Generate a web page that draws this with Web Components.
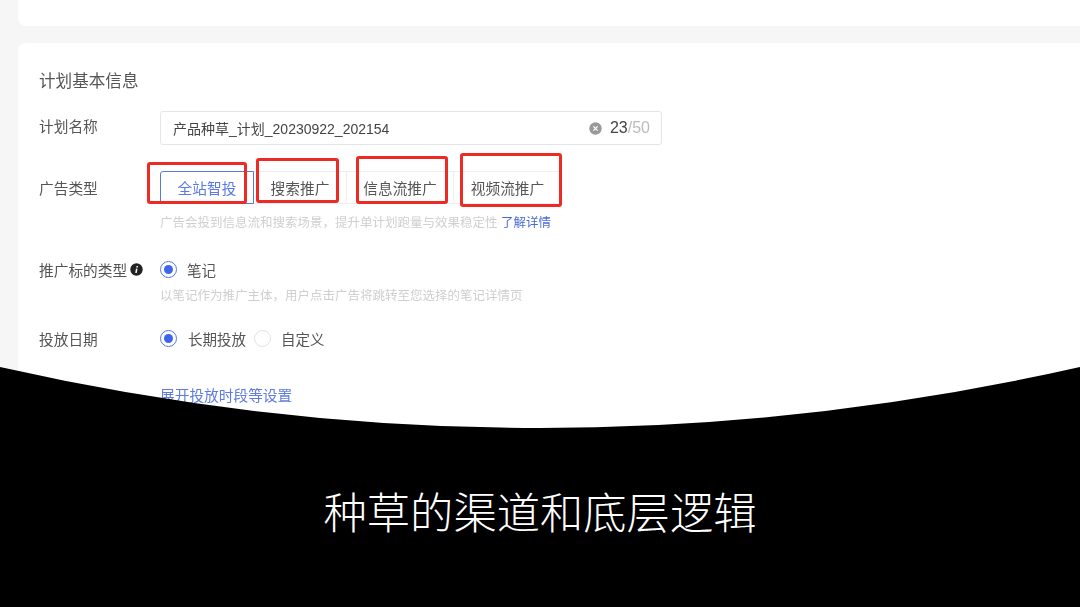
<!DOCTYPE html>
<html lang="zh-CN">
<head>
    <meta charset="UTF-8">
    <title>种草的渠道和底层逻辑</title>
    <style>
        html, body {
            margin: 0;
            width: 1080px;
            height: 607px;
            overflow: hidden;
            background: #f6f6f7;
            font-family: "Liberation Sans", "Noto Sans CJK SC", sans-serif;
        }
    </style>
</head>
<body>
<slide-frame caption="种草的渠道和底层逻辑">
    <plan-card title="计划基本信息">
        <form-row label="计划名称" height="34" gap="26" offset="-3">
            <name-input value="产品种草_计划_20230922_202154" count="23" max="50"></name-input>
        </form-row>
        <form-row label="广告类型" height="33" gap="10" offset="0">
            <type-tabs></type-tabs>
        </form-row>
        <form-row gap="27"><hint-text>广告会投到信息流和搜索场景，提升单计划跑量与效果稳定性 <a>了解详情</a></hint-text></form-row>
        <form-row label="推广标的类型" info height="20" gap="7">
            <radio-item checked>笔记</radio-item>
        </form-row>
        <form-row gap="23"><hint-text>以笔记作为推广主体，用户点击广告将跳转至您选择的笔记详情页</hint-text></form-row>
        <form-row label="投放日期" height="20" gap="38">
            <radio-item checked wide>长期投放</radio-item>
            <radio-item>自定义</radio-item>
        </form-row>
        <form-row><hint-text link>展开投放时段等设置</hint-text></form-row>
    </plan-card>
</slide-frame>

<script>
    // Builds a shadow root from a css + html string
    function shadow(el, html) {
        el.attachShadow({mode: 'open'}).innerHTML = html;
    }

    class SlideFrame extends HTMLElement {
        connectedCallback() {
            shadow(this, `
          <style>
            :host { display: block; position: relative; width: 1080px; height: 607px; overflow: hidden; }
            .page { display: flex; flex-direction: column; gap: 17px; padding-left: 18px; filter: blur(.7px); }
            .top { height: 26px; background: #fff; border-radius: 0 0 0 8px; }
            .curtain { position: absolute; left: 0; top: 0; display: block; }
            .caption {
              position: absolute; left: 0; right: 0; top: 482px;
              text-align: center; color: #fff;
              font: 300 43.3px/56px "Noto Sans CJK SC", sans-serif;
            }
          </style>
          <div class="page">
            <div class="top"></div>
            <slot></slot>
          </div>
          <svg class="curtain" width="1080" height="607" viewBox="0 0 1080 607">
            <path d="M0 367Q540 489 1080 367V607H0Z" fill="#000"/>
          </svg>
          <div class="caption">${this.getAttribute('caption')}</div>
        `);
        }
    }

    class PlanCard extends HTMLElement {
        connectedCallback() {
            shadow(this, `
          <style>
            :host { display: block; background: #fff; border-radius: 8px 0 0 8px; padding: 25px 0 60px 21px; height: 500px; }
            h2 { margin: 0 0 17px; padding-top: 2px; font-size: 16.6px; line-height: 24px; font-weight: 400; color: #555; }
          </style>
          <h2>${this.getAttribute('title')}</h2>
          <slot></slot>
        `);
        }
    }

    class FormRow extends HTMLElement {
        connectedCallback() {
            const label = this.getAttribute('label') || '';
            const info = this.hasAttribute('info')
                ? `<svg width="13" height="13" viewBox="0 0 13 13"><circle cx="6.5" cy="6.5" r="6.2" fill="#222"/><path d="M7.2 3v1.4M6.7 5.6 6 10" stroke="#fff" stroke-width="1.5" fill="none"/></svg>`
                : '';
            shadow(this, `
          <style>
            :host {
              display: grid; grid-template-columns: 121px 1fr; align-items: center;
              margin-bottom: ${this.getAttribute('gap') || 0}px;
              min-height: ${this.getAttribute('height') || 0}px;
            }
            .label {
              display: flex; align-items: center; gap: 3px; font-size: 14.7px; color: #555;
              position: relative; top: ${this.getAttribute('offset') || 0}px;
            }
            .body { display: flex; align-items: center; }
          </style>
          <div class="label">${label}${info}</div>
          <div class="body"><slot></slot></div>
        `);
        }
    }

    class NameInput extends HTMLElement {
        connectedCallback() {
            shadow(this, `
          <style>
            :host {
              display: flex; align-items: center; box-sizing: border-box;
              width: 502px; height: 34px; padding: 0 11px 0 12px;
              border: 1px solid #e4e5e8; border-radius: 3px;
              font-size: 14px; color: #444;
            }
            .value { flex: 1; }
            svg { margin-right: 8px; }
            .count { font-size: 16px; color: #444; }
            .count span { color: #bbb; }
          </style>
          <div class="value">${this.getAttribute('value')}</div>
          <svg width="13" height="13" viewBox="0 0 13 13">
            <circle cx="6.5" cy="6.5" r="6.2" fill="#999"/>
            <path d="M4.4 4.4l4.2 4.2M8.6 4.4l-4.2 4.2" stroke="#fff" stroke-width="1.3"/>
          </svg>
          <div class="count">${this.getAttribute('count')}<span>/${this.getAttribute('max')}</span></div>
        `);
        }
    }

    class TypeTabs extends HTMLElement {
        connectedCallback() {
            const tabs = [['全站智投', 94], ['搜索推广', 93], ['信息流推广', 107], ['视频流推广', 108]];
            const boxes = [[-13, -9, 100, 42], [96, -13, 83, 45], [196, -15, 92, 48], [300, -18, 102, 54]];
            shadow(this, `
          <style>
            :host { display: flex; position: relative; height: 33px; font-size: 14.7px; color: #555; }
            .tab {
              box-sizing: border-box; height: 33px; line-height: 33px; text-align: center; padding-top: 1px;
              border: 1px solid #eceef0; border-left: 0;
            }
            .tab.on { border: 1px solid #5b78e0; border-radius: 3px 0 0 3px; color: #5a78e6; }
            .mark {
              position: absolute; box-sizing: border-box;
              border: 3px solid #ee2a24; border-radius: 3px;
            }
          </style>
          ${tabs.map((t, i) => `<div class="tab ${i ? '' : 'on'}" style="width:${t[1]}px">${t[0]}</div>`).join('')}
          ${boxes.map(b => `<div class="mark" style="left:${b[0]}px;top:${b[1]}px;width:${b[2]}px;height:${b[3]}px"></div>`).join('')}
        `);
        }
    }

    class HintText extends HTMLElement {
        connectedCallback() {
            const color = this.hasAttribute('link') ? '#5f7be0' : '#cfcfcf';
            const size = this.hasAttribute('link') ? 14.7 : 12.5;
            shadow(this, `
          <style>
            :host { display: block; grid-column: 2; font-size: ${size}px; line-height: 18px; color: ${color}; white-space: nowrap; }
          </style>
          <slot></slot>
        `);
            this.querySelectorAll('a').forEach(a => a.style.color = '#4a6cd8');
        }
    }

    class RadioItem extends HTMLElement {
        connectedCallback() {
            const checked = this.hasAttribute('checked');
            const wide = this.hasAttribute('wide');
            shadow(this, `
          <style>
            :host { display: inline-flex; align-items: center; gap: ${wide ? 11 : 10}px; margin-right: ${wide ? 8 : 0}px; font-size: 14.5px; color: #555; }
            .dot {
              box-sizing: border-box; width: 17px; height: 17px; border-radius: 50%;
              border: 1px solid ${checked ? '#5b78e0' : '#e2e2e2'};
              display: flex; align-items: center; justify-content: center;
            }
            .dot i { width: 9px; height: 9px; border-radius: 50%; background: #3d66ef; display: ${checked ? 'block' : 'none'}; }
          </style>
          <span class="dot"><i></i></span><slot></slot>
        `);
        }
    }

    customElements.define('slide-frame', SlideFrame);
    customElements.define('plan-card', PlanCard);
    customElements.define('form-row', FormRow);
    customElements.define('name-input', NameInput);
    customElements.define('type-tabs', TypeTabs);
    customElements.define('hint-text', HintText);
    customElements.define('radio-item', RadioItem);
</script>
</body>
</html>
